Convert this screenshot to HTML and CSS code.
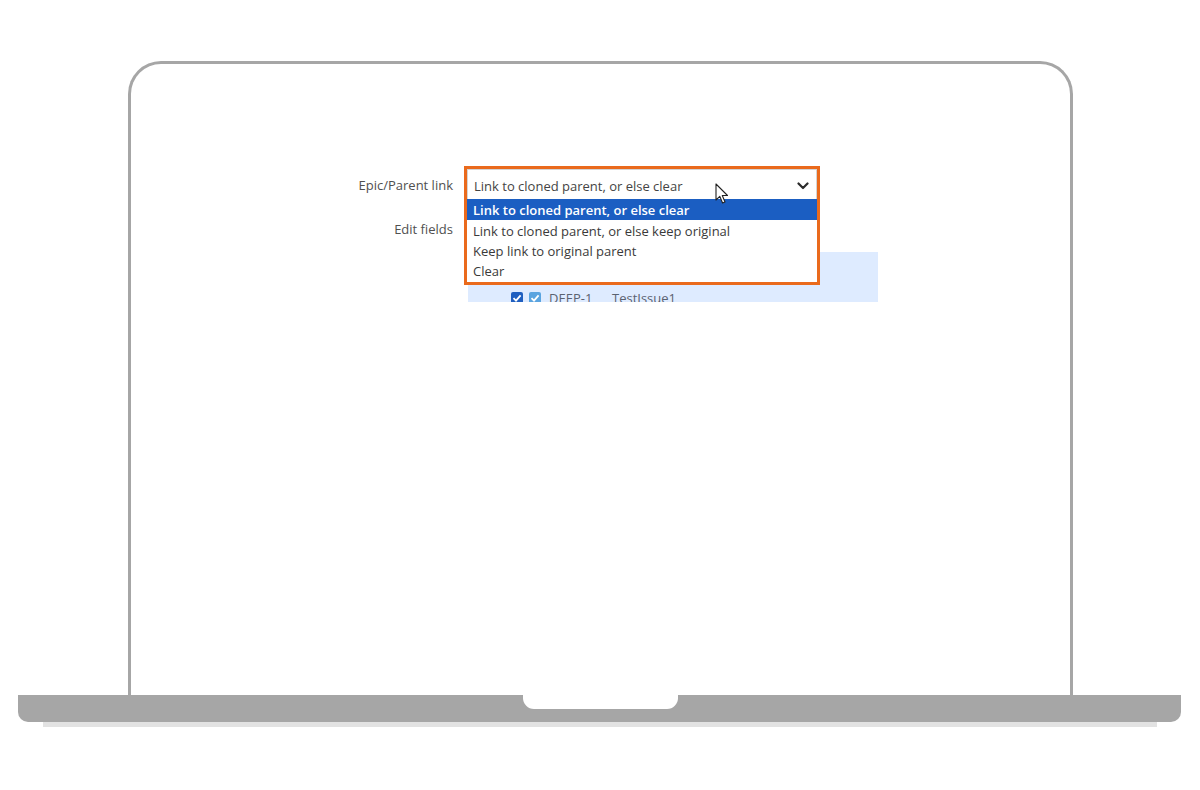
FILE: index.html
```html
<!DOCTYPE html>
<html>
<head>
<meta charset="utf-8">
<link rel="stylesheet" href="styles.css">
</head>
<body>
<div class="scene">
  <div class="screen">
    <div class="viewport">
      <div class="row row-epic">
        <div class="label">Epic/Parent link</div>
        <div class="picker">
          <div class="annot">
            <div class="select">
              <span class="select-value">Link to cloned parent, or else clear</span>
              <svg class="chev" width="12" height="8" viewBox="0 0 12 8"><path d="M1.5 1.5 L6 6 L10.5 1.5" fill="none" stroke="#2b2b2b" stroke-width="2.2" stroke-linecap="round" stroke-linejoin="round"/></svg>
            </div>
            <ul class="menu">
              <li class="opt opt-active">Link to cloned parent, or else clear</li>
              <li class="opt">Link to cloned parent, or else keep original</li>
              <li class="opt">Keep link to original parent</li>
              <li class="opt">Clear</li>
            </ul>
            <svg class="cursor" width="14" height="22" viewBox="0 0 14 22"><path d="M1 1 L1 17 L4.8 13.4 L7.6 20 L10 19 L7.3 12.5 L12.5 12.5 Z" fill="#fff" stroke="#222" stroke-width="1.1" stroke-linejoin="round"/></svg>
          </div>
        </div>
      </div>
      <div class="row row-edit">
        <div class="label">Edit fields</div>
        <div></div>
      </div>
      <div class="panel">
        <div class="issue">
          <span class="cb cb-dark"><svg width="12" height="12" viewBox="0 0 12 12"><path d="M2.5 6.2 L5 8.6 L9.6 3.4" fill="none" stroke="#fff" stroke-width="1.8"/></svg></span>
          <span class="cb cb-light"><svg width="12" height="12" viewBox="0 0 12 12"><path d="M2.5 6.2 L5 8.6 L9.6 3.4" fill="none" stroke="#fff" stroke-width="1.8"/></svg></span>
          <span class="key">DEEP-1</span>
          <span class="summary">TestIssue1</span>
        </div>
      </div>
    </div>
  </div>
  <div class="base"><div class="notch"></div></div>
  <div class="base-shadow"></div>
</div>
</body>
</html>
```
FILE: styles.css
```css
html, body {
  margin: 0;
  padding: 0;
  background: #fff;
}
body {
  width: 1200px;
  height: 790px;
  overflow: hidden;
  font-family: "Open Sans", "Noto Sans", sans-serif;
}
.scene {
  padding-top: 61px;
}
.screen {
  margin-left: 128px;
  width: 939px;
  height: 631px;
  border: 3px solid #a6a6a6;
  border-bottom: none;
  border-radius: 33px 33px 0 0;
  background: #fff;
}
.viewport {
  height: 238px;
  overflow: hidden;
  padding-top: 102px;
  box-sizing: border-box;
}
.row {
  display: grid;
  grid-template-columns: 322px 356px;
  column-gap: 11px;
}
.row-epic {
  height: 33px;
}
.label {
  text-align: right;
  font-size: 13px;
  color: #505050;
}
.row-epic .label {
  padding-top: 3px;
  line-height: 32px;
}
.row-edit {
  margin-top: 20px;
  line-height: 20px;
}
.picker {
  position: relative;
}
.annot {
  position: absolute;
  top: 0;
  left: 0;
  width: 350px;
  border: 3px solid #ea6a1c;
  background: #fff;
  z-index: 2;
}
.select {
  height: 30px;
  box-sizing: border-box;
  border: 1px solid #d4d4d4;
  border-bottom: none;
  display: flex;
  align-items: center;
  justify-content: space-between;
  padding: 2px 7px 0 6px;
  font-size: 13px;
  color: #444;
}
.chev {
  display: block;
}
.menu {
  list-style: none;
  margin: 0;
  padding: 0 0 2px 0;
}
.opt {
  height: 20px;
  line-height: 22px;
  padding-left: 6px;
  font-size: 13px;
  color: #3a3a3a;
}
.opt-active {
  height: 21px;
  line-height: 23px;
  background: #1b5ec2;
  color: #fff;
  font-weight: 600;
}
.cursor {
  position: absolute;
  left: 248px;
  top: 14px;
}
.panel {
  margin-top: 13px;
  margin-left: 337px;
  width: 410px;
  height: 80px;
  background: #deebff;
}
.issue {
  display: flex;
  align-items: center;
  padding-top: 39px;
  padding-left: 43px;
  font-size: 13px;
  color: #5a6270;
  line-height: 14px;
}
.cb {
  width: 12px;
  height: 12px;
  border-radius: 2px;
  display: inline-block;
  margin-right: 6px;
}
.cb svg {
  display: block;
}
.cb-dark {
  background: #1f5fc0;
}
.cb-light {
  background: #5aa4e0;
  margin-right: 8px;
}
.key {
  width: 63px;
}
.base {
  margin-left: 18px;
  width: 1163px;
  height: 27px;
  background: #a6a6a6;
  border-radius: 0 0 10px 10px;
}
.notch {
  margin-left: 505px;
  width: 155px;
  height: 14px;
  background: #fff;
  border-radius: 0 0 11px 11px;
}
.base-shadow {
  margin-left: 43px;
  width: 1114px;
  height: 5px;
  background: #e2e2e2;
}
```
